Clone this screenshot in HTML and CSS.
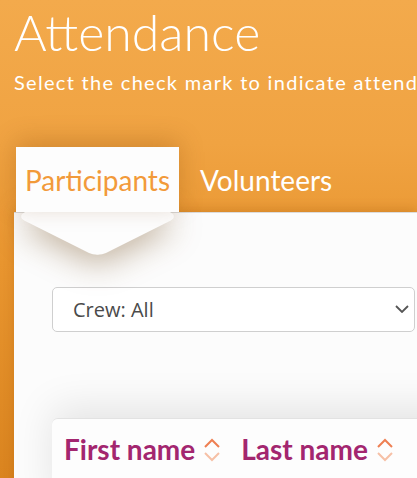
FILE: index.html
```html
<!DOCTYPE html>
<html lang="en">
<head>
  <meta charset="UTF-8" />
  <meta name="viewport" content="width=device-width, initial-scale=1.0" />
  <title>Attendance</title>
  <link rel="stylesheet" href="styles.css">
</head>
<body>
  <div class="header">
    <h1>Attendance</h1>
    <p class="lead">Select the check mark to indicate attendance for each participant</p>
  </div>

  <div class="tabs">
    <div class="tab active">Participants</div>
    <div class="tab">Volunteers</div>
  </div>

  <div class="card">
    <div class="picker">
      <span>Crew: All</span>
      <svg width="14" height="8" viewBox="0 0 14 8"><path d="M1 1l6 6 6-6" fill="none" stroke="#555" stroke-width="1.8"/></svg>
    </div>

    <div class="table">
      <div class="th">First name
        <svg class="sort" width="18" height="26" viewBox="0 0 18 26"><path d="M2 10l7-7 7 7" fill="none" stroke="#ee7f52" stroke-width="2"/><path d="M2 16l7 7 7-7" fill="none" stroke="#f6c0a6" stroke-width="2"/></svg>
      </div>
      <div class="th">Last name
        <svg class="sort" width="18" height="26" viewBox="0 0 18 26"><path d="M2 10l7-7 7 7" fill="none" stroke="#ee7f52" stroke-width="2"/><path d="M2 16l7 7 7-7" fill="none" stroke="#f6c0a6" stroke-width="2"/></svg>
      </div>
    </div>
  </div>
</body>
</html>
```

FILE: styles.css
```css
html, body { height: 100%; }
body { margin: 0; overflow: hidden; font-family: Lato, "Open Sans", sans-serif; background: linear-gradient(180deg, #f3aa4c 0%, #f0a342 30%, #e8952f 55%, #da841f 100%); color: #fff; }
.header { padding: 0 14px; }
h1 { margin: 0; padding-top: 2px; font-size: 50px; font-weight: 300; line-height: 1.2; white-space: nowrap; }
.lead { margin: 8px 0 0; font-size: 20px; line-height: 1.2; white-space: nowrap; letter-spacing: 1.3px; }
.tabs { display: flex; align-items: flex-start; gap: 12px; margin: 53px 0 0 16px; position: relative; z-index: 2; }
.tab { font-size: 28px; line-height: 1.2; padding: 17px 9px 14px; white-space: nowrap; }
.tab.active { background: #fdfdfd; color: #f29a3a; position: relative; box-shadow: 0 -6px 24px rgba(120, 60, 0, 0.25); }
.tab.active::after { content: ""; position: absolute; left: 24px; top: 12px; width: 115px; height: 115px; background: #fdfdfd; border-radius: 12px; transform: scaleY(0.5) rotate(45deg); box-shadow: 12px 12px 40px rgba(110, 70, 20, 0.4); z-index: -1; }
.card { margin-left: 14px; background: #fcfcfc; border-top: 1px solid #dcdcdc; padding: 74px 2px 0 38px; height: 400px; box-shadow: 0 -3px 10px rgba(150, 80, 0, 0.25); position: relative; z-index: 1; }
.picker { display: flex; align-items: center; justify-content: space-between; height: 43px; border: 1px solid #cfcfcf; border-radius: 5px; background: #fff; padding: 0 5px 0 20px; font-family: "Open Sans", sans-serif; font-size: 20px; color: #4a4a4a; }
.table { margin-top: 86px; background: #fdfdfd; border-top: 1px solid #e2e2e2; border-radius: 6px 0 0 0; box-shadow: 0 -10px 40px rgba(0, 0, 0, 0.10); padding: 14px 0 0 12px; height: 80px; display: flex; align-items: flex-start; gap: 20px; margin-right: -80px; }
.th { display: flex; align-items: center; gap: 8px; font-size: 28px; font-weight: 700; color: #a3266f; line-height: 1.2; white-space: nowrap; }
.sort { flex: none; margin-top: 2px; }
```
